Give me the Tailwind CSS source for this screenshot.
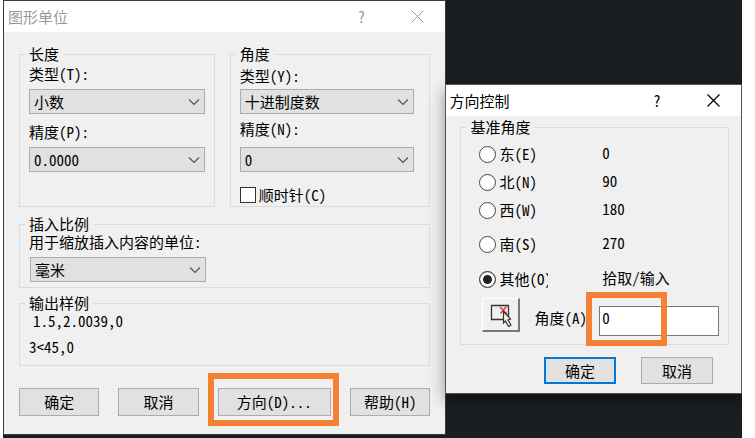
<!DOCTYPE html>
<html lang="zh-CN">

<head>
    <meta charset="UTF-8">
    <meta name="viewport" content="width=device-width, initial-scale=1.0">
    <script src="https://cdn.jsdelivr.net/npm/@tailwindcss/browser@4"></script>
    <title>图形单位</title>
</head>

<body class="bg-white pl-[3px] pr-[13px] font-['Noto_Sans_CJK_SC',sans-serif] text-[15px] leading-5 text-black [font-feature-settings:'hwid']">
    <div class="flex items-start overflow-hidden bg-[#1a1d22] pb-[3px]">

        <!-- Drawing units -->
        <section class="w-3/5 border border-[#3c3c3c] bg-[#f0f0f0]" aria-labelledby="units-title">
            <header class="flex h-[31px] items-center bg-white pl-1 text-[#999]">
                <h1 id="units-title" class="flex-1">图形单位</h1>
                <button type="button" class="w-14">?</button>
                <button type="button" class="flex w-14 justify-center" aria-label="关闭">
                    <svg class="size-[13px]" viewBox="0 0 13 13" fill="none" stroke="currentColor"><path d="M.5.5l12 12M12.5.5l-12 12" /></svg>
                </button>
            </header>

            <form class="px-[15px] pt-3 pb-[18px]">
                <div class="grid grid-cols-[196fr_201fr] gap-[15px]">
                    <fieldset class="border border-[#dcdcdc] pr-[9px] pb-[34px] pl-[9px]">
                        <legend class="-ml-1 px-1">长度</legend>
                        <label for="length-type" class="block">类型(T):</label>
                        <div class="relative mt-[5px]">
                            <select id="length-type" class="block h-[25px] w-full appearance-none border border-[#adadad] bg-[#e1e1e1] pl-1">
                                <option>小数</option>
                            </select>
                            <svg class="pointer-events-none absolute top-2 right-[5px] h-2.5 w-3" viewBox="0 0 12 10" fill="none" stroke="#555" stroke-width="1.2"><path d="M1 2.5l5 5 5-5" /></svg>
                        </div>
                        <label for="length-precision" class="mt-2 block">精度(P):</label>
                        <div class="relative mt-[5px]">
                            <select id="length-precision" class="block h-[25px] w-full appearance-none border border-[#adadad] bg-[#e1e1e1] pl-1">
                                <option>0.0000</option>
                            </select>
                            <svg class="pointer-events-none absolute top-2 right-[5px] h-2.5 w-3" viewBox="0 0 12 10" fill="none" stroke="#555" stroke-width="1.2"><path d="M1 2.5l5 5 5-5" /></svg>
                        </div>
                    </fieldset>

                    <fieldset class="border border-[#dcdcdc] pr-[15px] pl-[9px]">
                        <legend class="-ml-1 px-1">角度</legend>
                        <label for="angle-type" class="mt-0.5 block">类型(Y):</label>
                        <div class="relative mt-[3px]">
                            <select id="angle-type" class="block h-[25px] w-full appearance-none border border-[#adadad] bg-[#e1e1e1] pl-1">
                                <option>十进制度数</option>
                            </select>
                            <svg class="pointer-events-none absolute top-2 right-[5px] h-2.5 w-3" viewBox="0 0 12 10" fill="none" stroke="#555" stroke-width="1.2"><path d="M1 2.5l5 5 5-5" /></svg>
                        </div>
                        <label for="angle-precision" class="mt-[5px] block">精度(N):</label>
                        <div class="relative mt-2">
                            <select id="angle-precision" class="block h-[25px] w-full appearance-none border border-[#adadad] bg-[#e1e1e1] pl-1">
                                <option>0</option>
                            </select>
                            <svg class="pointer-events-none absolute top-2 right-[5px] h-2.5 w-3" viewBox="0 0 12 10" fill="none" stroke="#555" stroke-width="1.2"><path d="M1 2.5l5 5 5-5" /></svg>
                        </div>
                        <label class="mt-[13px] flex items-center gap-[3px]">
                            <input type="checkbox" class="size-4 appearance-none border border-[#333] bg-white checked:bg-[#333]">
                            顺时针(C)
                        </label>
                    </fieldset>
                </div>

                <fieldset class="mt-[7px] border border-[#dcdcdc] px-[9px] pb-[5px]">
                    <legend class="-ml-1 px-1">插入比例</legend>
                    <label for="insert-unit" class="block leading-4">用于缩放插入内容的单位:</label>
                    <div class="relative mt-[7px] ml-px w-[45%]">
                        <select id="insert-unit" class="block h-[25px] w-full appearance-none border border-[#adadad] bg-[#e1e1e1] pl-1">
                            <option>毫米</option>
                        </select>
                        <svg class="pointer-events-none absolute top-2 right-[5px] h-2.5 w-3" viewBox="0 0 12 10" fill="none" stroke="#555" stroke-width="1.2"><path d="M1 2.5l5 5 5-5" /></svg>
                    </div>
                </fieldset>

                <fieldset class="mt-[5px] border border-[#dcdcdc] px-[9px] pb-2.5 leading-4">
                    <legend class="-ml-1 px-1 leading-5">输出样例</legend>
                    <p class="pl-1">1.5,2.0039,0</p>
                    <p class="mt-2.5">3&lt;45,0</p>
                </fieldset>

                <div class="mt-[22px] flex gap-[19px]">
                    <button type="button" class="h-7 flex-1 border border-[#adadad] bg-[#e1e1e1]">确定</button>
                    <button type="button" class="h-7 flex-1 border border-[#adadad] bg-[#e1e1e1]">取消</button>
                    <div class="relative flex flex-[1.45]">
                        <button type="button" class="h-7 flex-1 border border-[#adadad] bg-[#e1e1e1]">方向(D)...</button>
                        <div class="pointer-events-none absolute -top-[15px] -right-2 -bottom-2.5 -left-2.5 border-6 border-[#f58233]"></div>
                    </div>
                    <button type="button" class="h-7 flex-1 border border-[#adadad] bg-[#e1e1e1]">帮助(H)</button>
                </div>
            </form>
        </section>

        <!-- Direction control -->
        <section class="z-10 mt-[84px] -ml-px flex-1 border border-[#555] bg-[#f0f0f0] shadow-[0_6px_14px_rgba(0,0,0,0.4)]" aria-labelledby="direction-title">
            <header class="flex h-[31px] items-center bg-white pl-[3px]">
                <h2 id="direction-title" class="flex-1">方向控制</h2>
                <button type="button" class="w-14">?</button>
                <button type="button" class="flex w-14 justify-center" aria-label="关闭">
                    <svg class="size-[13px]" viewBox="0 0 13 13" fill="none" stroke="currentColor" stroke-width="1.2"><path d="M.5.5l12 12M12.5.5l-12 12" /></svg>
                </button>
            </header>

            <form class="pt-px pb-[9px]">
                <fieldset class="mr-3 ml-3.5 border border-[#dcdcdc] pr-[9px] pb-2 pl-[18px]">
                    <legend class="-ml-[13px] px-1">基准角度</legend>
                    <div class="mt-[3px] grid h-7 grid-cols-2 items-center">
                        <label class="flex items-center gap-[3px]">
                            <input type="radio" name="base" class="size-[17px] appearance-none rounded-full border border-[#444] bg-white checked:bg-[#222] checked:shadow-[inset_0_0_0_3px_white]">
                            东(E)
                        </label>
                        <span class="pb-0.5 pl-[3px]">0</span>
                    </div>
                    <div class="grid h-7 grid-cols-2 items-center">
                        <label class="flex items-center gap-[3px]">
                            <input type="radio" name="base" class="size-[17px] appearance-none rounded-full border border-[#444] bg-white checked:bg-[#222] checked:shadow-[inset_0_0_0_3px_white]">
                            北(N)
                        </label>
                        <span class="pb-0.5 pl-[3px]">90</span>
                    </div>
                    <div class="grid h-7 grid-cols-2 items-center">
                        <label class="flex items-center gap-[3px]">
                            <input type="radio" name="base" class="size-[17px] appearance-none rounded-full border border-[#444] bg-white checked:bg-[#222] checked:shadow-[inset_0_0_0_3px_white]">
                            西(W)
                        </label>
                        <span class="pb-0.5 pl-[3px]">180</span>
                    </div>
                    <div class="mt-1.5 grid h-7 grid-cols-2 items-center">
                        <label class="flex items-center gap-[3px]">
                            <input type="radio" name="base" class="size-[17px] appearance-none rounded-full border border-[#444] bg-white checked:bg-[#222] checked:shadow-[inset_0_0_0_3px_white]">
                            南(S)
                        </label>
                        <span class="pb-0.5 pl-[3px]">270</span>
                    </div>
                    <div class="mt-[7px] grid h-7 grid-cols-2 items-center">
                        <label class="flex items-center gap-[3px]">
                            <input type="radio" name="base" checked class="size-[17px] appearance-none rounded-full border border-[#444] bg-white checked:bg-[#222] checked:shadow-[inset_0_0_0_3px_white]">
                            <span class="w-[49px] overflow-hidden whitespace-nowrap">其他(O)</span>
                        </label>
                        <span class="pb-0.5 pl-[3px]">拾取/输入</span>
                    </div>
                    <div class="mt-[5px] grid grid-cols-2">
                        <div class="flex items-start pl-[3px]">
                            <button type="button" class="flex h-[34px] w-[38px] items-start justify-center border-t border-r-2 border-b-2 border-l border-t-white border-r-[#777] border-b-[#777] border-l-white pt-1" aria-label="拾取角度">
                                <svg class="h-6 w-6" viewBox="0 0 24 24" fill="none">
                                    <path d="M2.5 2.5h17v14h-17z" stroke="#333" stroke-width="1.3" />
                                    <path d="M11 4l7 7M17.500 3.500l-6 7" stroke="#e03a3a" stroke-width="1.5" />
                                    <path d="M14.500 8.500v11.500l2-2 3 5.500 2.500-1.500-3-5 2.500-1z" fill="#f0f0f0" stroke="#333" stroke-width="1.2" />
                                </svg>
                            </button>
                            <label for="angle" class="mt-2.5 ml-3.5 whitespace-nowrap">角度(A)</label>
                        </div>
                        <div class="relative pt-2">
                            <input id="angle" type="text" value="0" class="block h-[30px] w-full border border-[#7a7a7a] bg-white pb-2 pl-0.5">
                            <div class="pointer-events-none absolute -top-1.5 -bottom-2.5 -left-[13px] w-[81px] border-6 border-[#f58233]"></div>
                        </div>
                    </div>
                </fieldset>

                <div class="mt-3 flex justify-end gap-[25px] pr-7">
                    <button type="button" class="h-[27px] w-[27%] border-2 border-[#0078d7] bg-[#e1e1e1]">确定</button>
                    <button type="button" class="h-[27px] w-[27%] border border-[#adadad] bg-[#e1e1e1]">取消</button>
                </div>
            </form>
        </section>
    </div>
</body>

</html>
